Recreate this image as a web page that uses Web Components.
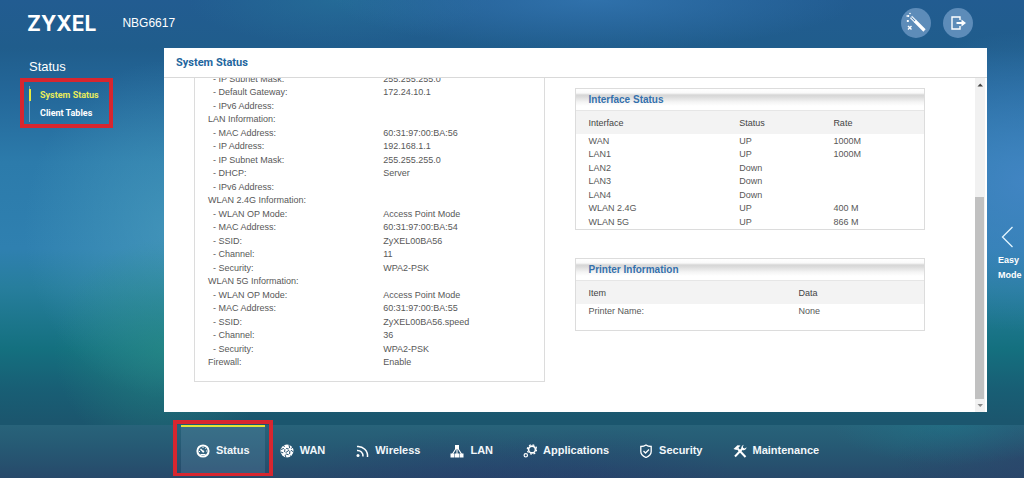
<!DOCTYPE html>
<html lang="en">
<head>
<meta charset="utf-8">
<title>ZYXEL NBG6617 - System Status</title>
<style>
html,body{margin:0;min-height:100%;}
body{font-family:"Liberation Sans",Arial,sans-serif;font-size:9px;color:#585858;overflow:hidden;}
</style>
</head>
<body>
<router-app></router-app>
<script>
const define = (name, markup, setup) => {
  const tpl = document.createElement('template');
  tpl.innerHTML = markup;
  customElements.define(name, class extends HTMLElement {
    constructor() {
      super();
      this.attachShadow({mode: 'open'}).append(tpl.content.cloneNode(true));
    }
    connectedCallback() {
      if (setup && !this.ready) { this.ready = true; setup(this, this.shadowRoot); }
    }
  });
};

/* Round translucent header button; the icon is slotted */
define('round-button', `
<style>
:host{display:block}
button{display:flex;align-items:center;justify-content:center;width:30px;height:30px;padding:0;border:0;border-radius:50%;background:#5d8cb9;color:#fff}
</style>
<button type="button"><slot></slot></button>`,
(el, root) => root.querySelector('button').setAttribute('aria-label', el.getAttribute('label')));

define('app-header', `
<style>
:host{display:flex;align-items:center;height:46px;padding:0 51px 2px 27px;color:#fff}
.brand{font:700 21px "Inter",sans-serif;color:#fff;text-decoration:none}
.model{margin-left:26px;font-size:12px}
.tools{display:flex;gap:12px;margin-left:auto}
svg{display:block}
</style>
<a class="brand" href="#">ZYXEL</a>
<span class="model">NBG6617</span>
<div class="tools">
<round-button label="Setup wizard"><svg width="22" height="22" viewBox="0 0 22 22" fill="none" stroke="#fff">
<path d="M6 5 10.500 9.500" stroke-width="3.200" stroke="#dbe7f2"/><path d="M6.500 5.500 10 9" stroke="#5d8cb9" stroke-width="1"/>
<path d="M10 9 19.500 18.500" stroke-width="3.200"/>
<path d="M1.500 4h2M2 9h2M3.500 3v2M2.500 8v2" stroke-width="1.300"/><path d="m3 14 3.500 3.500M6.500 14 3 17.500" stroke-width="1.400"/><circle cx="5" cy="1.500" r=".8" fill="#fff" stroke="none"/></svg></round-button>
<round-button label="Log out"><svg width="16" height="14" viewBox="0 0 16 14" fill="none" stroke="#fff" stroke-width="1.400"><path d="M10 4V1H2v12h8v-3"/><path d="M6.500 7h6" stroke-width="2"/><path d="M11.500 3.500 16 7l-4.500 3.500z" fill="#fff" stroke="none"/></svg></round-button>
</div>`);

define('side-nav', `
<style>
:host{display:block;width:164px;flex:none;box-sizing:border-box;padding:11px 0 0 20px;color:#fff}
h2{margin:0 0 3px 9px;font-weight:400;font-size:13px;line-height:16px}
nav{box-sizing:border-box;width:93px;height:50px;border:4px solid #d7262f;padding:4px 5px}
ul{list-style:none;margin:0;padding:0;border-left:1px solid #6b9fc3}
li{height:18px;line-height:18px;display:flex;align-items:center}
a{color:#fff;text-decoration:none;font:700 9px/18px "Roboto",sans-serif;padding-left:9px;white-space:nowrap}
li::before{content:"";width:2px;height:12px;margin-left:-1px}
li.on::before{background:#e9e93c}
li.on a{color:#e9ec5a}
</style>
<h2>Status</h2>
<nav aria-label="Status"><ul><li class="on"><a href="#system" aria-current="page">System Status</a></li><li><a href="#clients">Client Tables</a></li></ul></nav>`);

/* Bordered card with an optional glossy title bar */
define('info-card', `
<style>
:host{display:block;border:1px solid #dcdcdc;background:#fff}
h3{margin:0;height:22px;padding-left:13px;font-size:10px;line-height:22px;color:#3470ac;border-bottom:1px solid #e6e6e6;box-sizing:border-box;
background:linear-gradient(#fff 0,#fafafa 4px,#d6d6d6 6px,#dcdcdc 8px,#f4f4f4 13px,#fff 17px)}
h3[hidden]{display:none}
</style>
<h3></h3><slot></slot>`,
(el, root) => {
  const h = root.querySelector('h3');
  h.textContent = el.getAttribute('heading') || '';
  h.hidden = !el.hasAttribute('heading');
});

const tableStyle = `
:host{display:block}
table{width:100%;table-layout:fixed;border-collapse:collapse;font-size:9px}
th,td{padding:0;text-align:left;font-weight:400;line-height:13px;white-space:pre;height:14px;vertical-align:middle}
tbody tr:nth-child(even)>*{height:13px}
th:first-child,td:first-child{padding-left:13px}
`;

/* Name/value list of the device, read from the rows constant */
const deviceRows = [
  ['- IP Subnet Mask:','255.255.255.0'],['- Default Gateway:','172.24.10.1'],['- IPv6 Address:',''],
  ['LAN Information:',''],['- MAC Address:','60:31:97:00:BA:56'],['- IP Address:','192.168.1.1'],
  ['- IP Subnet Mask:','255.255.255.0'],['- DHCP:','Server'],['- IPv6 Address:',''],
  ['WLAN 2.4G Information:',''],['- WLAN OP Mode:','Access Point Mode'],['- MAC Address:','60:31:97:00:BA:54'],
  ['- SSID:','ZyXEL00BA56'],['- Channel:','11'],['- Security:','WPA2-PSK'],
  ['WLAN 5G Information:',''],['- WLAN OP Mode:','Access Point Mode'],['- MAC Address:','60:31:97:00:BA:55'],
  ['- SSID:','ZyXEL00BA56.speed'],['- Channel:','36'],['- Security:','WPA2-PSK'],['Firewall:','Enable']
];
define('device-info', `
<style>${tableStyle}
:host{padding:11px 0 12px}
th{width:54%;box-sizing:border-box}
th.sub:first-child{padding-left:18px}
</style>
<table><tbody></tbody></table>`,
(el, root) => {
  root.querySelector('tbody').innerHTML = deviceRows.map(([k, v]) =>
    `<tr><th scope="row" class="${k[0] === '-' ? 'sub' : ''}">${k}</th><td>${v}</td></tr>`).join('');
});

const gridStyle = `${tableStyle}
thead th{height:22px;line-height:22px;background:#f3f3f3;color:#444;box-sizing:border-box;padding-top:1px}
`;
define('interface-table', `
<style>${gridStyle}
th:nth-child(1){width:47%}th:nth-child(2){width:27%}
</style>
<table><thead><tr><th>Interface</th><th>Status</th><th>Rate</th></tr></thead><tbody>
<tr><td>WAN</td><td>UP</td><td>1000M</td></tr>
<tr><td>LAN1</td><td>UP</td><td>1000M</td></tr>
<tr><td>LAN2</td><td>Down</td><td></td></tr>
<tr><td>LAN3</td><td>Down</td><td></td></tr>
<tr><td>LAN4</td><td>Down</td><td></td></tr>
<tr><td>WLAN 2.4G</td><td>UP</td><td>400 M</td></tr>
<tr><td>WLAN 5G</td><td>UP</td><td>866 M</td></tr>
</tbody></table>`);
define('printer-table', `
<style>${gridStyle}
:host{padding-bottom:12px}
th:first-child{width:64%}
</style>
<table><thead><tr><th>Item</th><th>Data</th></tr></thead><tbody>
<tr><td>Printer Name:</td><td>None</td></tr></tbody></table>`);

define('scroll-rail', `
<style>
:host{display:flex;flex-direction:column;width:10px;flex:none;margin-right:2px;background:#f1f1f1}
svg{display:block;flex:none}
.space{flex:106 1 0}
.thumb{flex:202 1 0;margin:0 1px 0 0;background:#c1c1c1}
</style>
<svg width="10" height="13" viewBox="0 0 10 13"><path d="M2.500 8.500h5.500L5.250 5.500z" fill="#444"/></svg>
<div class="space"></div><div class="thumb"></div>
<svg width="10" height="13" viewBox="0 0 10 13"><path d="M2.500 5h5.500L5.250 8z" fill="#8a8a8a"/></svg>`);

define('status-view', `
<style>
:host{display:flex;flex-direction:column;flex:1;min-width:0;min-height:0;background:#fff}
h1{flex:none;margin:0;height:30px;box-sizing:border-box;padding-left:12px;font:700 11px/30px "Roboto",sans-serif;color:#1f669e;border-bottom:1px solid #d9d9d9}
.body{flex:1;display:flex;min-height:0}
/* scrolled to its end: the overflow is cut at the top */
.view{flex:1;min-width:0;display:flex;flex-direction:column;justify-content:flex-end;overflow:hidden;padding:0 50px 30px 30px}
.cols{display:grid;grid-template-columns:1fr 1fr;gap:30px;flex:none}
.right{display:flex;flex-direction:column;gap:28px;padding-top:28px}
</style>
<h1>System Status</h1>
<div class="body"><div class="view"><div class="cols">
<info-card><device-info></device-info></info-card>
<div class="right">
<info-card heading="Interface Status"><interface-table></interface-table></info-card>
<info-card heading="Printer Information"><printer-table></printer-table></info-card>
</div></div></div>
<scroll-rail></scroll-rail></div>`);

define('mode-switch', `
<style>
:host{display:block;width:37px;flex:none;box-sizing:border-box;padding-top:178px}
button{display:block;border:0;background:none;padding:0 0 0 11px;color:#fff;font:700 9px/15px "Liberation Sans",sans-serif;text-align:left}
svg{display:block;margin:0 0 5px 3px}
</style>
<button type="button"><svg width="13" height="22" viewBox="0 0 13 22" fill="none" stroke="#e4f6ff" stroke-width="1.300"><path d="M11.500 1 1.500 11l10 10"/></svg>Easy<br>Mode</button>`);

define('nav-tab', `
<style>
:host{display:block;position:relative}
a{display:flex;align-items:center;gap:6px;height:51px;box-sizing:border-box;padding:0 15px 4px;border-top:2px solid transparent;color:#f2f7fa;font-size:11px;font-weight:700;text-decoration:none;white-space:nowrap}
:host([active]) a{border-top-color:#e2e435;background:rgba(120,160,190,.22)}
::slotted(svg){display:block;flex:none;width:14px;height:14px;margin-top:2px}
.mark{display:none}
:host([active]) .mark{display:block;position:absolute;inset:-5px -8px 0 -8px;border:4px solid #d7262f;border-bottom-width:3px;pointer-events:none}
</style>
<a href="#"><slot name="icon"></slot><slot></slot></a><div class="mark"></div>`,
(el, root) => { if (el.hasAttribute('active')) root.querySelector('a').setAttribute('aria-current', 'page'); });

define('bottom-nav', `
<style>
:host{display:block;flex:none;box-sizing:border-box;height:53px;padding-left:181px;
background:radial-gradient(ellipse 160px 50px at 45% 100%,rgba(40,58,110,.4),transparent),radial-gradient(ellipse 140px 50px at 58% 100%,rgba(40,58,110,.35),transparent),radial-gradient(ellipse 120px 40px at 93% 0,rgba(30,120,140,.5),transparent),radial-gradient(ellipse 130px 60px at 100% 70%,rgba(44,66,105,.6),transparent),linear-gradient(#28637a 0,#265a74 40%,#27496a 100%)}
nav{display:flex}
</style>
<nav aria-label="Main">
<nav-tab active><svg slot="icon" viewBox="0 0 14 14" fill="none" stroke="#fff"><circle cx="7" cy="7" r="5.600" stroke-width="2"/><path d="M7 7.500 4.500 5" stroke-width="1.500"/><circle cx="7.200" cy="7.600" r="1.100" fill="#fff" stroke="none"/><path d="M7 3v1M10 4l-.6.700M11 7h-1M3 7.500h1M4.500 10.500h5" stroke-width="1"/></svg>Status</nav-tab>
<nav-tab><svg slot="icon" viewBox="0 0 14 14"><circle cx="7" cy="7" r="6.500" fill="#fff"/><g fill="none" stroke="#26506e" stroke-width="1"><path d="M1 5.500 5 4l5 1.500L13 3M5 4 3.500 1M5 4l-.500 5.500L10 5.500M10 5.500 9 1M4.500 9.500 1 8M4.500 9.500 6 13.500M4.500 9.500 9.500 11 10 5.500M9.500 11l2 1.500M10 5.500 13.500 8"/></g><g fill="#fff"><circle cx="5" cy="4" r="1.300"/><circle cx="10" cy="5.500" r="1.400"/><circle cx="4.500" cy="9.500" r="1.400"/><circle cx="9.500" cy="11" r="1.100"/></g></svg>WAN</nav-tab>
<nav-tab><svg slot="icon" viewBox="0 0 14 14" fill="none" stroke="#fff" stroke-width="1.500"><circle cx="3" cy="11.500" r="1.500" fill="#fff" stroke="none"/><path d="M2 6.500a5.500 5.500 0 0 1 6 6M2 2.500a9.500 9.500 0 0 1 10.500 10.500"/></svg>Wireless</nav-tab>
<nav-tab><svg slot="icon" viewBox="0 0 14 14" fill="#fff"><path d="M5 1h4v4H5zM.5 9.500h4v4h-4zM5 9.500h4v4H5zM9.500 9.500h4v4h-4z"/><path d="M6 4.500 2.500 10M8 4.500l3.500 5.500M7 4.500V10" stroke="#fff" stroke-width="1.100"/></svg>LAN</nav-tab>
<nav-tab><svg slot="icon" viewBox="0 0 14 14" fill="none" stroke="#fff"><circle cx="9" cy="5.500" r="3.400" stroke-width="1.600"/><circle cx="9" cy="5.500" r="4.700" stroke-width="1.200" stroke-dasharray="1.900 1.790"/><circle cx="2.800" cy="11.300" r="1.700" stroke-width="1.200"/></svg>Applications</nav-tab>
<nav-tab><svg slot="icon" viewBox="0 0 14 14" fill="none" stroke="#fff" stroke-width="1.300"><path d="M7 1C5.500 2.200 3.500 2.500 1.800 2.500v5c0 3 2.500 4.800 5.200 6 2.700-1.200 5.200-3 5.200-6v-5C10.500 2.500 8.500 2.200 7 1z"/><path d="m4.500 7 2 2L10 5.500"/></svg>Security</nav-tab>
<nav-tab><svg slot="icon" viewBox="0 0 14 14" fill="none" stroke="#fff"><path d="M4.500 4.500 12.500 13" stroke-width="2"/><path d="M10 4 2 12.500" stroke-width="2"/><path d="M.5 5 4.500 1.200 7.500 1.500 3.500 6z" fill="#fff" stroke="none"/><path d="M13.500 3.200 11.800 4.500 10.200 4 9.800 2.200 11 .8A3 3 0 0 0 8.500 4.800L10 6.200A3 3 0 0 0 13.500 3.200z" fill="#fff" stroke="none"/></svg>Maintenance</nav-tab>
</nav>`);

define('router-app', `
<style>
:host{display:flex;flex-direction:column;height:100vh;
background:
radial-gradient(ellipse 110px 110px at 16% 73%,rgba(38,140,130,.6),transparent),
radial-gradient(ellipse 170px 150px at 100% 38%,rgba(68,134,198,.85),transparent),
radial-gradient(ellipse 150px 170px at 17% 48%,rgba(75,158,190,.65),transparent),
radial-gradient(ellipse 260px 50px at 58% 0,rgba(52,120,180,.75),transparent),
radial-gradient(ellipse 150px 45px at 33% 0,rgba(38,116,155,.6),transparent),
linear-gradient(#225c91 0,#205d8c 10%,#24689a 20%,#2c7bab 34%,#2f80b0 52%,#277e9d 60%,#14707f 73%,#185f75 81%,#1b566e 88%,#1b566e 100%)}
main{display:flex;flex:1;min-height:0;margin-bottom:13px}
</style>
<app-header></app-header>
<main><side-nav></side-nav><status-view></status-view><mode-switch></mode-switch></main>
<bottom-nav></bottom-nav>`);
</script>
</body>
</html>
